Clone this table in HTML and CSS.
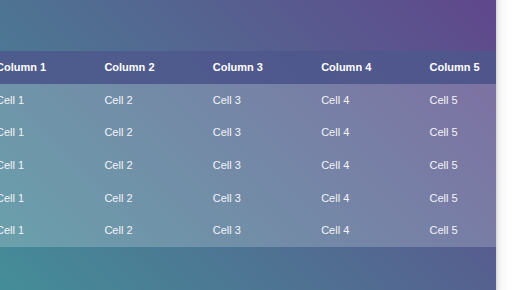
FILE: index.html
```html
<!DOCTYPE html>
<html>
<head>
<meta charset="utf-8">
<link rel="stylesheet" href="styles.css">
</head>
<body>
<div class="page">
  <div class="stage">
    <table class="grid">
      <thead>
        <tr><th>Column 1</th><th>Column 2</th><th>Column 3</th><th>Column 4</th><th>Column 5</th></tr>
      </thead>
      <tbody>
        <tr><td>Cell 1</td><td>Cell 2</td><td>Cell 3</td><td>Cell 4</td><td>Cell 5</td></tr>
        <tr><td>Cell 1</td><td>Cell 2</td><td>Cell 3</td><td>Cell 4</td><td>Cell 5</td></tr>
        <tr><td>Cell 1</td><td>Cell 2</td><td>Cell 3</td><td>Cell 4</td><td>Cell 5</td></tr>
        <tr><td>Cell 1</td><td>Cell 2</td><td>Cell 3</td><td>Cell 4</td><td>Cell 5</td></tr>
        <tr><td>Cell 1</td><td>Cell 2</td><td>Cell 3</td><td>Cell 4</td><td>Cell 5</td></tr>
      </tbody>
    </table>
  </div>
  <div class="strip"></div>
</div>
</body>
</html>
```
FILE: styles.css
```css
html, body {
  margin: 0;
  padding: 0;
  width: 516px;
  height: 290px;
  overflow: hidden;
  background: #fff;
}
.page {
  display: flex;
  width: 516px;
  height: 290px;
}
.stage {
  flex: 0 0 496px;
  height: 290px;
  overflow: hidden;
  background: linear-gradient(45deg, #448d98 0%, #526a91 50%, #60478c 100%);
  padding-top: 51px;
  box-sizing: border-box;
}
.strip {
  flex: 1;
  background: linear-gradient(to right, #d6d6d8 0px, #ececee 2px, #f8f8f8 5px, #fefefe 12px, #ffffff 100%);
}
.grid {
  border-collapse: collapse;
  table-layout: fixed;
  width: 542px;
  margin-left: -19px;
  font-family: "Liberation Sans", Arial, sans-serif;
  font-size: 11px;
  color: #fff;
}
.grid th, .grid td {
  text-align: left;
  padding: 0 0 0 15px;
  line-height: 13px;
  white-space: nowrap;
}
.grid th {
  height: 33px;
  font-weight: bold;
  background: rgba(78, 88, 140, 0.88);
}
.grid td {
  height: 32.6px;
  background: rgba(255, 255, 255, 0.2);
  color: #f4f4f8;
}
```
